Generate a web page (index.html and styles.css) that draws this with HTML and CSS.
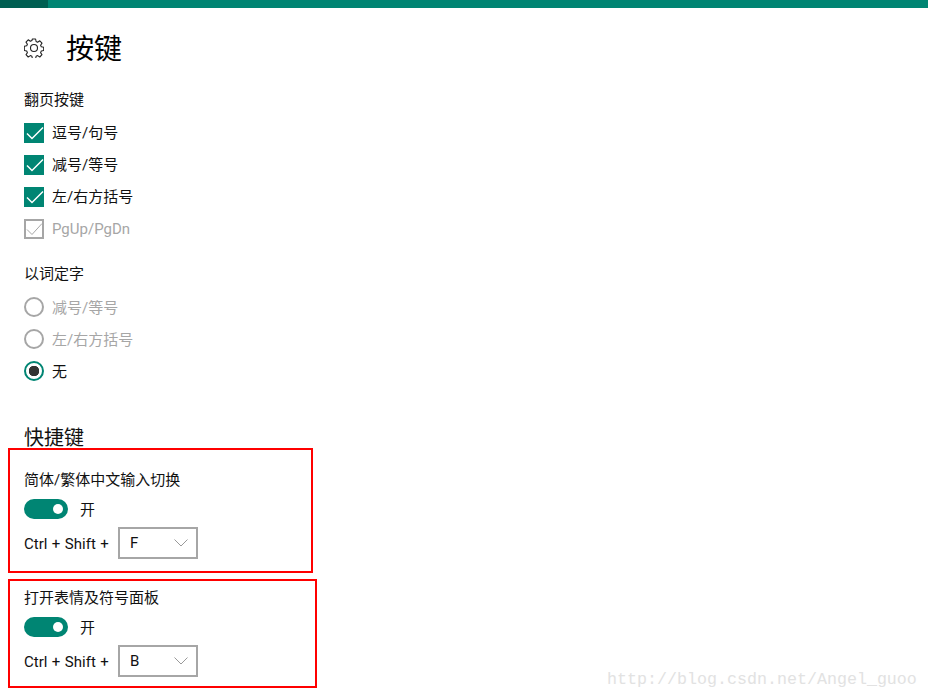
FILE: index.html
```html
<!DOCTYPE html>
<html lang="zh-CN">
<head>
    <meta charset="UTF-8">
    <meta name="viewport" content="width=device-width, initial-scale=1.0">
    <title>按键</title>
    <link rel="stylesheet" href="styles.css">
</head>
<body>
    <div class="top-bar"><div class="top-bar-back"></div></div>

    <div class="content">
        <div class="page-title">
            <svg class="gear" width="20" height="20" viewBox="0 0 20 20" fill="none" stroke="#222" stroke-width="1.1" stroke-linejoin="round">
                <path d="M8.4 1h3.2l.5 2.500 1.500.7 2.200-1.400 2.200 2.300-1.400 2.100.7 1.600 2.400.5v3.200l-2.400.5-.7 1.600 1.400 2.100-2.200 2.300-2.200-1.400-1.500.7-.5 2.400H8.400l-.5-2.400-1.500-.7-2.200 1.400-2.200-2.300 1.400-2.100-.7-1.600-2.400-.5V8.300l2.400-.5.7-1.600-1.400-2.100 2.200-2.300 2.200 1.400 1.500-.7z"/>
                <circle cx="10" cy="10" r="3.500"/>
            </svg>
            <h1>按键</h1>
        </div>

        <div class="group-label">翻页按键</div>
        <div class="option">
            <span class="check"><svg width="20" height="20" viewBox="0 0 20 20" fill="none" stroke="#fff" stroke-width="1.5"><path d="M3 10.500l5 5L19 4.500"/></svg></span>
            <span>逗号/句号</span>
        </div>
        <div class="option">
            <span class="check"><svg width="20" height="20" viewBox="0 0 20 20" fill="none" stroke="#fff" stroke-width="1.5"><path d="M3 10.500l5 5L19 4.500"/></svg></span>
            <span>减号/等号</span>
        </div>
        <div class="option">
            <span class="check"><svg width="20" height="20" viewBox="0 0 20 20" fill="none" stroke="#fff" stroke-width="1.5"><path d="M3 10.500l5 5L19 4.500"/></svg></span>
            <span>左/右方括号</span>
        </div>
        <div class="option disabled">
            <span class="check check-off"><svg width="16" height="16" viewBox="0 0 16 16" fill="none" stroke="#a6a6a6" stroke-width="1"><path d="M1 8.500l5 5L16 2.500"/></svg></span>
            <span>PgUp/PgDn</span>
        </div>

        <div class="group-label second">以词定字</div>
        <div class="option radio-option disabled">
            <span class="radio"></span>
            <span class="radio-text">减号/等号</span>
        </div>
        <div class="option radio-option disabled">
            <span class="radio"></span>
            <span class="radio-text">左/右方括号</span>
        </div>
        <div class="option radio-option">
            <span class="radio radio-on"></span>
            <span class="radio-text">无</span>
        </div>

        <h2>快捷键</h2>
    </div>

    <div class="shortcut shortcut-first">
        <div class="shortcut-name">简体/繁体中文输入切换</div>
        <div class="toggle-row">
            <span class="toggle"></span>
            <span class="toggle-text">开</span>
        </div>
        <div class="key-row">
            <span class="key-label">Ctrl + Shift +</span>
            <div class="select">
                <span>F</span>
                <svg width="14" height="8" viewBox="0 0 14 8" fill="none" stroke="#999" stroke-width="1"><path d="M.5.5L7 7 13.500.5"/></svg>
            </div>
        </div>
    </div>

    <div class="shortcut shortcut-second">
        <div class="shortcut-name">打开表情及符号面板</div>
        <div class="toggle-row">
            <span class="toggle"></span>
            <span class="toggle-text">开</span>
        </div>
        <div class="key-row">
            <span class="key-label">Ctrl + Shift +</span>
            <div class="select">
                <span>B</span>
                <svg width="14" height="8" viewBox="0 0 14 8" fill="none" stroke="#999" stroke-width="1"><path d="M.5.5L7 7 13.500.5"/></svg>
            </div>
        </div>
    </div>

    <div class="watermark">http://blog.csdn.net/Angel_guoo</div>
</body>
</html>
```

FILE: styles.css
```css
* {
    margin: 0;
    padding: 0;
    box-sizing: border-box;
}

html, body {
    height: 699px;
    overflow: hidden;
}

body {
    position: relative;
    background-color: #fff;
    color: #111;
    font-family: Roboto, "Noto Sans CJK SC", sans-serif;
    font-size: 15px;
    line-height: 20px;
}

.top-bar {
    height: 8px;
    background-color: #008573;
}

.top-bar-back {
    width: 48px;
    height: 8px;
    background-color: #005f52;
}

.content {
    padding: 0 24px;
}

.page-title {
    display: flex;
    align-items: center;
    height: 40px;
    margin-top: 20px;
}

.gear {
    margin-right: 22px;
}

h1 {
    padding-top: 4px;
    font-size: 28px;
    font-weight: 400;
    line-height: 40px;
    color: #000;
}

.group-label {
    margin-top: 22px;
    margin-bottom: 13px;
}

.group-label.second {
    margin-top: 25px;
    margin-bottom: 13px;
}

.option {
    display: flex;
    align-items: center;
    gap: 8px;
    height: 20px;
    margin-bottom: 12px;
}

.option.disabled {
    color: #a6a6a6;
}

.radio-text,
.toggle-text {
    padding-top: 2px;
}

.check {
    display: flex;
    width: 20px;
    height: 20px;
    background-color: #008573;
}

.check-off {
    background: none;
    border: 2px solid #a6a6a6;
}

.radio {
    width: 20px;
    height: 20px;
    border: 2px solid #a6a6a6;
    border-radius: 50%;
}

.radio-on {
    border-color: #008573;
    background: radial-gradient(circle, #333 5px, #fff 5.500px);
}

h2 {
    margin-top: 41px;
    font-size: 20px;
    font-weight: 400;
    line-height: 32px;
}

.shortcut {
    margin-left: 8px;
    padding-left: 14px;
    border: 2px solid #f00;
}

.shortcut-first {
    width: 305px;
    height: 125px;
    margin-top: -6px;
    padding-top: 20px;
}

.shortcut-second {
    width: 309px;
    height: 109px;
    margin-top: 6px;
    padding-top: 7px;
}

.toggle-row {
    display: flex;
    align-items: center;
    gap: 12px;
    height: 20px;
    margin-top: 9px;
}

.toggle {
    position: relative;
    width: 44px;
    height: 20px;
    border-radius: 10px;
    background-color: #008573;
}

.toggle::after {
    content: "";
    position: absolute;
    top: 5px;
    right: 5px;
    width: 10px;
    height: 10px;
    border-radius: 50%;
    background-color: #fff;
}

.key-row {
    display: flex;
    align-items: center;
    height: 32px;
    margin-top: 8px;
}

.key-label {
    width: 94px;
    padding-top: 2px;
    word-spacing: 0.75px;
}

.select {
    display: flex;
    align-items: center;
    justify-content: space-between;
    width: 80px;
    height: 32px;
    padding: 0 8px 0 10px;
    border: 2px solid #a6a6a6;
}

.watermark {
    position: absolute;
    left: 607px;
    top: 670px;
    font-family: "Liberation Mono", monospace;
    font-size: 16.67px;
    color: #e2e2e2;
}
```
